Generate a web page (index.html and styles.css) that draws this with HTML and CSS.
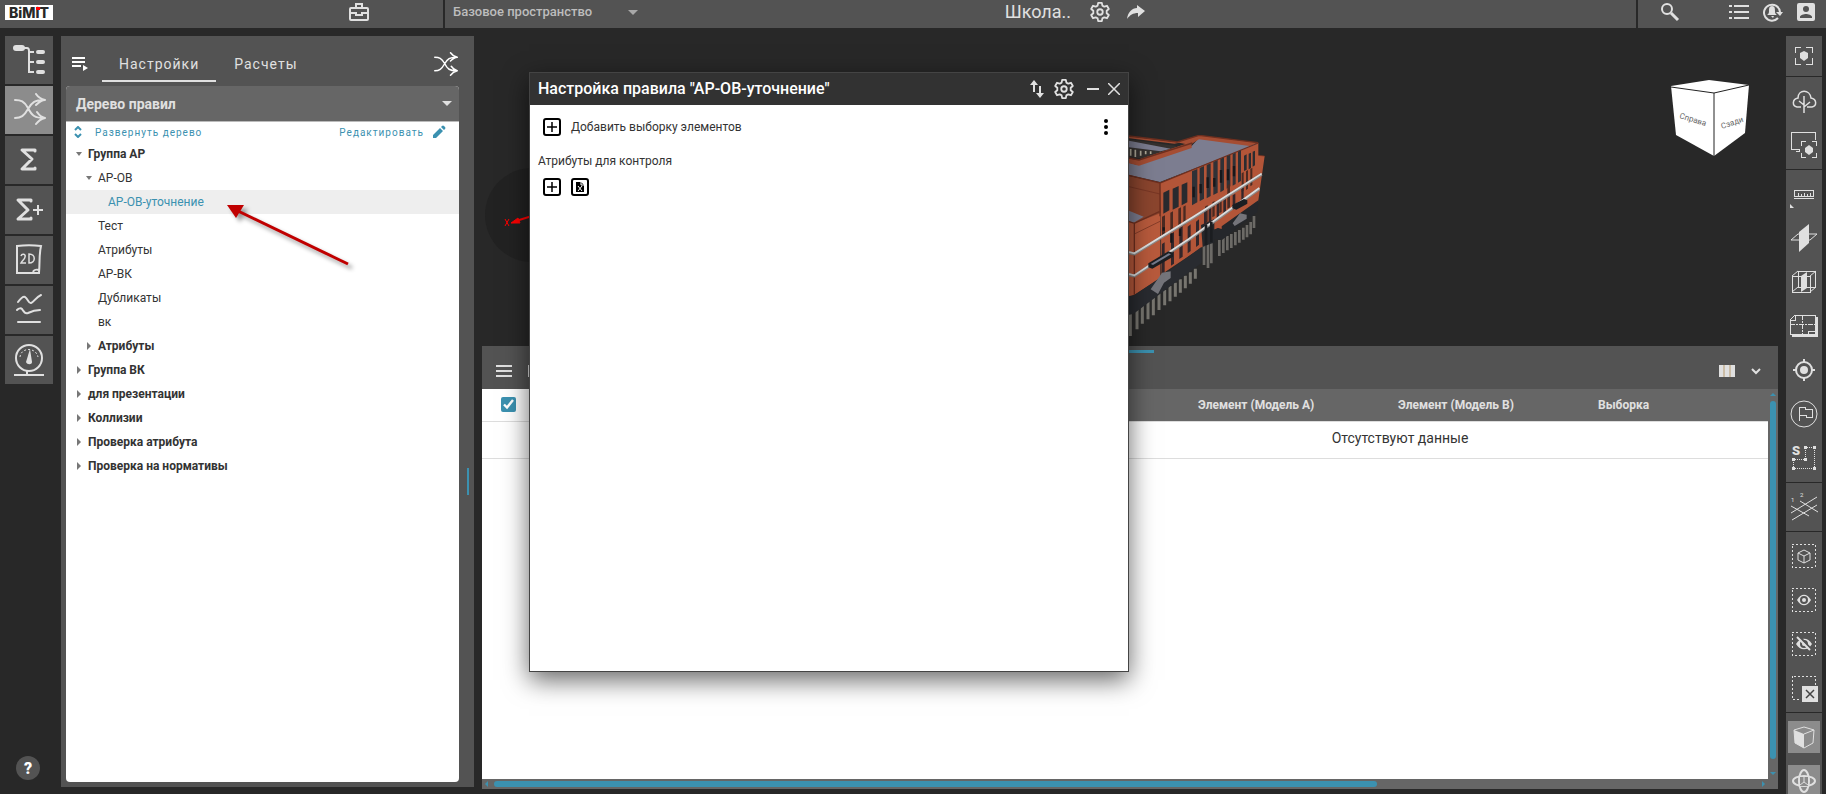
FILE: index.html
```html
<!DOCTYPE html>
<html lang="ru">
  <head>
    <meta charset="UTF-8" />
    <meta name="viewport" content="width=device-width, initial-scale=1.0" />
    <title>BiMiT</title>
    <link rel="stylesheet" href="styles.css" />
  </head>
  <body>
    <!-- общие иконки -->
    <svg class="sprite" aria-hidden="true">
      <symbol id="i-gear" viewBox="0 0 24 24">
        <path fill="none" stroke="currentColor" stroke-width="2" stroke-linejoin="round" d="M10 2h4l.6 3 2.100 1.200 2.900-1 2 3.500-2.300 2v2.600l2.300 2-2 3.500-2.900-1-2.100 1.200-.6 3h-4l-.6-3-2.100-1.200-2.900 1-2-3.500 2.300-2v-2.600l-2.300-2 2-3.500 2.900 1L9.400 5z" />
        <circle cx="12" cy="12" r="3" fill="none" stroke="currentColor" stroke-width="2" />
      </symbol>
      <symbol id="i-shuffle" viewBox="0 0 32 32">
        <path fill="none" stroke="currentColor" stroke-width="2" stroke-linecap="round" stroke-linejoin="round" d="M1 7c6 0 9 1 13 8 4 8 7 10 16 10M1 25c6 0 9-2 13-9 4-7 7-9 16-9M22 1c2 3 5 5 9 6-4 0-6 2-9 5M23 19c2 3 4 5 8 6-4 1-6 2-9 6" />
      </symbol>
      <symbol id="i-plus" viewBox="0 0 18 18">
        <rect x="1" y="1" width="16" height="16" rx="2" fill="none" stroke="currentColor" stroke-width="2" />
        <path stroke="currentColor" stroke-width="1.500" d="M9 4v10M4 9h10" />
      </symbol>
    </svg>

    <header class="topbar">
      <div class="topbar__left">
        <a href="#" class="logo">BiM<span class="logo__i">i</span>T</a>
        <button class="icon-btn" aria-label="Проекты">
          <svg width="20" height="18" viewBox="0 0 20 18" fill="none" stroke="currentColor" stroke-width="2">
            <rect x="1" y="5" width="18" height="12" rx="1" />
            <path d="M7 5V1h6v4M1 10h6v2h6v-2h6" />
          </svg>
        </button>
      </div>
      <div class="topbar__center">
        <div class="space">
          <select class="space__select" aria-label="Пространство">
            <option>Базовое пространство</option>
          </select>
          <svg class="space__caret" width="10" height="5" viewBox="0 0 10 5"><path fill="currentColor" d="M0 0h10L5 5z" /></svg>
        </div>
        <div class="project">
          <span class="project__name">Школа..</span>
          <button class="icon-btn" aria-label="Настройки проекта"><svg width="22" height="22"><use href="#i-gear" /></svg></button>
          <button class="icon-btn" aria-label="Поделиться">
            <svg width="20" height="16" viewBox="0 0 20 16"><path fill="currentColor" d="M11 1l8 6-7 6V9C7 9 4 11 1 15 2 8 6 4 11 4z" /></svg>
          </button>
        </div>
      </div>
      <div class="topbar__right">
        <button class="icon-btn search" aria-label="Поиск">
          <svg width="20" height="20" viewBox="0 0 20 20" fill="none" stroke="currentColor" stroke-width="2"><circle cx="7" cy="7" r="5" /><path d="M11 11l7 7" stroke-width="3" /></svg>
        </button>
        <button class="icon-btn" aria-label="Список">
          <svg width="20" height="16" viewBox="0 0 20 16" stroke="currentColor" stroke-width="2"><path d="M0 2h3M5 2h15M0 8h3M5 8h15M0 14h3M5 14h15" /></svg>
        </button>
        <button class="icon-btn" aria-label="Уведомления">
          <svg width="20" height="20" viewBox="0 0 20 20"><path fill="none" stroke="currentColor" stroke-width="2" d="M15 16a8 8 0 1 1 2-6" /><path fill="currentColor" d="M13 10h7l-3 4zM9 4c-3 0-3 3-3 5 0 3-1 3-2 4h10c-1-1-2-1-2-4 0-2 0-5-3-5zM8 14h3l-1 2z" /></svg>
        </button>
        <button class="icon-btn" aria-label="Профиль">
          <svg width="18" height="18" viewBox="0 0 18 18"><path fill="currentColor" fill-rule="evenodd" d="M2 0h14a2 2 0 0 1 2 2v14a2 2 0 0 1-2 2H2a2 2 0 0 1-2-2V2a2 2 0 0 1 2-2zm7 3a3 3 0 1 0 0 6 3 3 0 0 0 0-6zM3 15h12v-1c0-2-4-3-6-3s-6 1-6 3z" /></svg>
        </button>
      </div>
    </header>

    <div class="workspace">
      <nav class="rail">
        <button class="rail__btn" aria-label="Дерево">
          <svg viewBox="0 0 48 48" fill="none" stroke="currentColor" stroke-width="2"><path d="M18 12h4q2 0 2 3v21h5M24 16h5M24 26h5" /><path stroke-width="6" stroke-linecap="round" d="M11 12h6" /><path stroke-width="4" stroke-linecap="round" d="M33 16h5M33 26h5M33 36h5" /></svg>
        </button>
        <button class="rail__btn rail__btn--active" aria-label="Правила">
          <svg viewBox="0 0 48 48"><use href="#i-shuffle" x="9" y="7" width="32" height="32" /></svg>
        </button>
        <button class="rail__btn" aria-label="Сумма">
          <svg viewBox="0 0 48 48" fill="none" stroke="currentColor" stroke-width="3" stroke-linejoin="round" stroke-linecap="round"><path d="M30 15v-1H17l10 9-10 10h13v-1" /></svg>
        </button>
        <button class="rail__btn" aria-label="Сумма плюс">
          <svg viewBox="0 0 48 48" fill="none" stroke="currentColor" stroke-width="3" stroke-linejoin="round" stroke-linecap="round"><path d="M26 15v-1H13l10 10-10 9h13v-1" /><path stroke-width="2" stroke-linecap="butt" d="M28 24h10M33 19v10" /></svg>
        </button>
        <button class="rail__btn" aria-label="2D">
          <svg viewBox="0 0 48 48" fill="none" stroke="currentColor" stroke-width="2"><path d="M12 10c8-1 16-1 24 0-2 8-1 14-2 27H12zM34 34c-4-1-5 0-6 2" /><path stroke-width="1.500" d="M16 20c1-3 5-2 4 1 0 2-3 4-4 6h5M24 18v9c7 0 7-9 0-9z" /></svg>
        </button>
        <button class="rail__btn" aria-label="Графики">
          <svg viewBox="0 0 48 48" fill="none" stroke="currentColor" stroke-width="2" stroke-linecap="round"><path d="M13 16c3-4 5-6 7-5 3 2 4 7 6 6 3-1 5-6 10-8M12 24c2-2 4-2 5-1 2 3 3 5 6 4 4-2 7-3 12-3M13 36h22" /></svg>
        </button>
        <button class="rail__btn" aria-label="Показатели">
          <svg viewBox="0 0 48 48" fill="none" stroke="currentColor" stroke-width="2"><circle cx="24" cy="22" r="13" /><path d="M9 39h30M22 35v4" /><path stroke-width="1" stroke-dasharray="2 2" d="M15 21c1-10 16-10 18 0" /><path fill="currentColor" stroke="none" d="M25 13l2 13c0 3-5 3-6 0z" /></svg>
        </button>
        <button class="rail__help" aria-label="Справка">?</button>
      </nav>

      <aside class="panel">
        <div class="panel__tabs">
          <button class="icon-btn" aria-label="Список правил">
            <svg width="16" height="14" viewBox="0 0 16 14"><path stroke="currentColor" stroke-width="2" d="M0 1h13M0 5h13M0 9h9" /><path fill="currentColor" d="M11 8l5 3-5 3z" /></svg>
          </button>
          <button class="tab tab--active">Настройки</button>
          <button class="tab">Расчеты</button>
          <button class="icon-btn panel__shuffle" aria-label="Проверить"><svg width="24" height="24"><use href="#i-shuffle" /></svg></button>
        </div>
        <div class="panel__card">
          <button class="panel__title">Дерево правил
            <svg width="10" height="5" viewBox="0 0 10 5"><path fill="currentColor" d="M0 0h10L5 5z" /></svg>
          </button>
          <div class="tree-tools">
            <button class="link-btn link-btn--expand">
              <svg width="8" height="12" viewBox="0 0 8 12" fill="none" stroke="currentColor" stroke-width="2"><path d="M1 4l3-3 3 3M1 8l3 3 3-3" /></svg>
              Развернуть дерево
            </button>
            <button class="link-btn">
              Редактировать
              <svg width="14" height="14" viewBox="0 0 14 14" fill="currentColor"><path d="M1 10l7-7 3 3-7 7H1zM9 2l1-1q1-1 2 0l1 1q1 1 0 2l-1 1z" /></svg>
            </button>
          </div>
          <ul class="tree">
            <li class="tree__item tree__item--group tree__item--open">Группа АР</li>
            <li class="tree__item tree__item--l2 tree__item--open">АР-ОВ</li>
            <li class="tree__item tree__item--l3 tree__item--selected">АР-ОВ-уточнение</li>
            <li class="tree__item tree__item--l2">Тест</li>
            <li class="tree__item tree__item--l2">Атрибуты</li>
            <li class="tree__item tree__item--l2">АР-ВК</li>
            <li class="tree__item tree__item--l2">Дубликаты</li>
            <li class="tree__item tree__item--l2">вк</li>
            <li class="tree__item tree__item--l2 tree__item--group tree__item--closed">Атрибуты</li>
            <li class="tree__item tree__item--group tree__item--closed">Группа ВК</li>
            <li class="tree__item tree__item--group tree__item--closed">для презентации</li>
            <li class="tree__item tree__item--group tree__item--closed">Коллизии</li>
            <li class="tree__item tree__item--group tree__item--closed">Проверка атрибута</li>
            <li class="tree__item tree__item--group tree__item--closed">Проверка на нормативы</li>
          </ul>
        </div>
        <div class="panel__splitter"></div>
        <svg class="pointer" width="130" height="70" viewBox="0 0 130 70">
          <path d="M12 8l110 53" stroke="#c00000" stroke-width="3" />
          <path d="M1 2l17 0-8 13z" fill="#c00000" />
        </svg>
      </aside>

      <main class="main">
        <section class="viewer">
          <svg class="axes" width="94" height="94" viewBox="0 0 94 94">
            <circle cx="47" cy="47" r="47" fill="#222" />
            <path d="M47 48l-16 5" stroke="#f00" stroke-width="2" />
            <path d="M26 55l7-5 2 5zM20 51l4 7M24 51l-4 7" fill="#f00" stroke="#f00" />
          </svg>

          <svg class="building" width="136" height="204" viewBox="87 75 408 612">
            <!-- сваи -->
            <path d="M91 612v66M111 596v62M127 585v56M144 574v54M160 562v54M177 550v50M194 540v46M210 528v46M226 518v42M241 508v40M256 497v38M271 487v34M286 476v30" stroke="#77756f" stroke-width="9" />
            <path d="M312 375v90M324 370v104M334 400v60M358 390v48M370 384v45M382 378v43M394 372v42M406 366v40M418 360v38M430 353v36M441 345v37M452 336v37M462 318v36" stroke="#6c6a66" stroke-width="8" />
            <!-- стены -->
            <path d="M87 198l93 20v120l-93 20z" fill="#8b452e" />
            <path d="M180 218l295-120v38l19 2-20 140-170 135-119 80z" fill="#b35538" />
            <path d="M87 302l44 18-30 18-14-4z" fill="#7c7d90" />
            <path d="M87 335l16 5 78-30v194l-78 50-16 6z" fill="#b85a3c" />
            <!-- кровля -->
            <path d="M87 158l23 6 165-56 22-24 175 18-292 114-93-21z" fill="#7c7d90" />
            <path d="M87 88l143 20-20 14-65 26-58-6z" fill="#35312f" />
            <path d="M87 92l125 24-30 8-95-12z" fill="#7c7d90" />
            <path d="M92 117v20M106 119v22M122 122v15M137 123v10M152 124v8" stroke="#b0aa98" stroke-width="5" />
            <path d="M87 79l143 18 67-21 177 22-25 10-152-20-22 14v12l-158 53-30-7v-14l27 3 142-47-18-4-15 3-136-16z" fill="#a54d33" />
            <path d="M87 78l145 18 65-20 177 22M87 144l30 6 160-51M87 196l93 23 295-120M180 219v100M103 340v215M87 335l16 5 75-35" fill="none" stroke="#6e2f1f" stroke-width="4" />
            <path d="M87 230l93 22M103 372l77-38M475 136l19 2" fill="none" stroke="#6e2f1f" stroke-width="2" />
            <!-- цоколь -->
            <path d="M87 558l16-2 73-50 129-96v48L100 612l-13 2z" fill="#292b30" />
            <path d="M303 345l40-18v70l-35 14zM340 360l26-12 110-78-4 36-106 84-26-4z" fill="#25272b" />
            <!-- окна -->
            <path d="M190 248l18-9v62l-18 10zM218 236l18-8v62l-18 9zM245 224l17-7v60l-17 9z" fill="#292a2e" />
            <path d="M276 184l16-7v100l-16 9zM299 174l13-6v98l-13 8zM320 165l12-5v98l-12 7zM340 156l13-6v98l-13 7zM361 147l11-5v98l-11 7zM380 139l11-5v95l-11 7zM398 132l9-4v94l-9 5zM414 125l9-4v92l-9 5z" fill="#303136" />
            <path d="M432 137l8-4v46l-8 4zM446 131l7-3v46l-7 4zM458 125l7-3v44l-7 4z" fill="#2c2c30" />
            <path d="M186 320l9-4v62l-9 5zM211 308l8-4v60l-8 5zM235 296l8-4v58l-8 5zM250 290l7-4v56l-7 5zM315 290l8-5v50l-8 5zM337 277l7-4v45l-7 4zM358 268l7-4v42l-7 4zM382 226l8-4v70l-8 4zM425 190l6-4v56l-6 4zM438 184l6-4v56l-6 4zM451 177l6-4v52l-6 4z" fill="#4a2a22" />
            <path d="M186 402l8-5v90l-8 5zM213 372l9-6v95l-9 6zM238 355l10-7v92l-10 7zM263 350l9-7v80l-9 7zM288 335l9-7v76l-9 7zM312 305l7-5v50l-7 5zM326 297l8-5v50l-8 5zM350 283l7-5v44l-7 5zM370 272l8-5v42l-8 5zM398 256l8-5v44l-8 5zM424 238l7-5v40l-7 5z" fill="#33262a" />
            <path d="M281 230v32M302 222v28M323 202v32M343 204v26M363 180v38M384 178v33M402 168v31M191 352v10M214 370v28M240 358v20" stroke="#16171a" stroke-width="7" />
            <!-- пояса -->
            <path d="M87 428l16 4 175-108 207-131M87 494l16 4 165-110 210-152" fill="none" stroke="#8a8a8a" stroke-width="9" />
            <path d="M87 426l16 4 175-108 207-131M87 492l16 4 165-110 210-152" fill="none" stroke="#dedede" stroke-width="5" />
            <!-- козырьки и крыльца -->
            <path d="M145 460l60-36 14 4v12l-62 36-12-4z" fill="#1b1e22" />
            <path d="M152 462l54-32 7 3-54 32z" fill="#74798a" />
            <path d="M397 285l35-18 10 4v10l-33 18-12-4z" fill="#1b1e22" />
            <path d="M152 538l34-50 26-4v20l-20 14-18 34zM398 340l22-30 20 4v12l-36 22z" fill="#74747a" />
            <path d="M345 345l20-12v24l-20-6z" fill="#b35538" />
            <path d="M318 345v60M334 335v62" stroke="#1b1d20" stroke-width="8" />
          </svg>

          <svg class="cube" width="80" height="78" viewBox="0 0 80 78">
            <path d="M1 6l38-6 40 5-4 48-31 23L6 55z" fill="#fff" />
            <path d="M1 7l43 6 35-8M44 13v63" fill="none" stroke="#222" />
            <text x="9" y="38" transform="rotate(17 9 38)">Справа</text>
            <text x="52" y="49" transform="rotate(-19 52 49)">Сзади</text>
          </svg>
        </section>

        <section class="results">
          <div class="results__handle"></div>
          <div class="results__bar">
            <button class="icon-btn" aria-label="Меню">
              <svg width="16" height="12" viewBox="0 0 16 12" stroke="currentColor" stroke-width="2"><path d="M0 1h16M0 6h16M0 11h16" /></svg>
            </button>
            <button class="icon-btn" aria-label="Фильтр">
              <svg width="14" height="12" viewBox="0 0 14 12" fill="none" stroke="currentColor" stroke-width="2"><path d="M1 1h12v10H1z" /></svg>
            </button>
            <button class="icon-btn results__columns" aria-label="Столбцы">
              <svg width="16" height="12" viewBox="0 0 16 12"><path fill="#e0e0e0" d="M0 0h16v12H0z" /><path d="M5 0v12M11 0v12" stroke="#b89a6c" stroke-width="1" /></svg>
            </button>
            <button class="icon-btn" aria-label="Свернуть">
              <svg width="10" height="8" viewBox="0 0 10 8" fill="none" stroke="currentColor" stroke-width="2"><path d="M1 2l4 4 4-4" /></svg>
            </button>
          </div>
          <div class="results__body">
            <div class="results__scroll">
              <table class="grid">
                <colgroup>
                  <col class="grid__check" />
                  <col class="grid__wide" />
                  <col class="grid__col" />
                  <col class="grid__col" />
                  <col class="grid__col" />
                  <col />
                </colgroup>
                <thead>
                  <tr>
                    <th class="grid__pin"><input type="checkbox" class="check" aria-label="Выбрать все" checked /></th>
                    <th></th>
                    <th>Элемент (Модель А)</th>
                    <th>Элемент (Модель В)</th>
                    <th>Выборка</th>
                    <th></th>
                  </tr>
                </thead>
                <tbody>
                  <tr>
                    <td colspan="6">Отсутствуют данные</td>
                  </tr>
                </tbody>
              </table>
            </div>
            <div class="vbar">
              <svg width="6" height="3" viewBox="0 0 6 3"><path fill="currentColor" d="M0 3h6L3 0z" /></svg>
              <div class="vbar__thumb"></div>
              <svg width="6" height="3" viewBox="0 0 6 3"><path fill="currentColor" d="M0 0h6L3 3z" /></svg>
            </div>
          </div>
          <div class="hbar">
            <svg width="3" height="6" viewBox="0 0 3 6"><path fill="currentColor" d="M3 0v6L0 3z" /></svg>
            <div class="hbar__track"><div class="hbar__thumb"></div></div>
            <svg width="3" height="6" viewBox="0 0 3 6"><path fill="currentColor" d="M0 0v6l3-3z" /></svg>
          </div>
        </section>

        <div class="modal" role="dialog" aria-labelledby="modal-title">
          <div class="modal__header">
            <h2 id="modal-title">Настройка правила "АР-ОВ-уточнение"</h2>
            <button class="icon-btn" aria-label="Импорт и экспорт">
              <svg width="14" height="18" viewBox="0 0 14 18"><path fill="currentColor" d="M0 5l4-5 4 5H5v7H3V5zM6 13h3V6h2v7h3l-4 5z" /></svg>
            </button>
            <button class="icon-btn" aria-label="Настройки"><svg width="22" height="22"><use href="#i-gear" /></svg></button>
            <button class="icon-btn" aria-label="Свернуть">
              <svg width="12" height="12" viewBox="0 0 12 12" stroke="currentColor" stroke-width="2"><path d="M0 6h12" /></svg>
            </button>
            <button class="icon-btn" aria-label="Закрыть">
              <svg width="12" height="12" viewBox="0 0 12 12" stroke="currentColor" stroke-width="1.500"><path d="M0 0l12 12M12 0L0 12" /></svg>
            </button>
          </div>
          <div class="modal__body">
            <div class="modal__row">
              <button class="icon-btn" id="add-set" aria-label="Добавить"><svg width="18" height="18"><use href="#i-plus" /></svg></button>
              <label for="add-set">Добавить выборку элементов</label>
              <button class="icon-btn modal__more" aria-label="Ещё">
                <svg width="4" height="16" viewBox="0 0 4 16" fill="currentColor"><circle cx="2" cy="2" r="2" /><circle cx="2" cy="8" r="2" /><circle cx="2" cy="14" r="2" /></svg>
              </button>
            </div>
            <p class="modal__label">Атрибуты для контроля</p>
            <div class="modal__row">
              <button class="icon-btn" aria-label="Добавить атрибут"><svg width="18" height="18"><use href="#i-plus" /></svg></button>
              <button class="icon-btn" aria-label="Загрузить из Excel">
                <svg width="18" height="18" viewBox="0 0 18 18"><rect x="1" y="1" width="16" height="16" rx="2" fill="none" stroke="currentColor" stroke-width="2" /><path fill="currentColor" d="M5 4h5l3 3v7H5z" /><path d="M7 8l4 5M11 8l-4 5M10 4v3h3" stroke="#fff" fill="none" /></svg>
              </button>
            </div>
          </div>
        </div>
      </main>

      <nav class="tools">
        <div class="tools__group tools__group--first">
          <button class="tool" aria-label="Показать всё">
            <svg viewBox="0 0 32 32"><path class="crisp" d="M7 13V7h6M18 7h6v6M24 18v6h-6M13 24H7v-6" /><path class="fill" d="M16 11l4 2v5l-4 3-4-3v-5z" /></svg>
          </button>
        </div>
        <div class="tools__group">
          <button class="tool" aria-label="Окружение">
            <svg viewBox="0 0 32 32"><path stroke-width="1.500" d="M13 22H9c-5-1-5-8 1-9 0-9 12-9 13 0 6 1 6 8 1 9h-5M16 11v17M16 20l-5-4M16 22l6-5" /></svg>
          </button>
          <button class="tool" aria-label="Фокус экрана">
            <svg viewBox="0 0 32 32"><path class="crisp" d="M11 20H3V3h24v8M11 20v2H8M13 17v-5h5M24 12h4v5M28 24v4h-4M18 28h-5v-4" /><path class="fill" d="M21 16l4 3v4l-4 3-4-3v-4z" /></svg>
          </button>
        </div>
        <div class="tools__group">
          <button class="tool" aria-label="Измерения">
            <svg viewBox="0 0 32 32"><path class="crisp" d="M6 12h19v6H6zM6 20h20M10 15v3M13 16v2M16 15v3M19 16v2M22 15v3" /><path class="fill" d="M2 26v4h4z" /></svg>
          </button>
          <button class="tool" aria-label="Секущая плоскость">
            <svg viewBox="0 0 32 32"><path d="M3 18l7-6h19l-7 6z" /><path class="fill" d="M11 10l10-8v19l-10 9z" /></svg>
          </button>
          <button class="tool" aria-label="Секущий куб">
            <svg viewBox="0 0 32 32"><path class="crisp" d="M4 10h18v16H4zM10 5h17v16H10z" /><path d="M4 10l6-5M22 10l6-5M4 26l6-5M22 26l6-5" /><path class="fill" d="M13 10l6-4v16l-6 4z" /></svg>
          </button>
          <button class="tool" aria-label="План">
            <svg viewBox="0 0 32 32"><path class="crisp" d="M7 5h20v19H2V10zM2 10h5V5M20 24v-3h7" /><path class="crisp" stroke-dasharray="5 1 2 1" d="M14 5v19M2 14h25" /><path stroke-width="2" d="M29 7v19H4" /></svg>
          </button>
          <button class="tool" aria-label="Цель">
            <svg viewBox="0 0 32 32"><circle cx="16" cy="16" r="8" stroke-width="2" /><circle class="fill" cx="16" cy="16" r="4" /><path stroke-width="2" d="M16 5v4M16 23v4M5 16h4M23 16h4" /></svg>
          </button>
          <button class="tool" aria-label="Замечания">
            <svg viewBox="0 0 32 32"><circle cx="16" cy="16" r="13" /><path class="crisp" d="M11 23V9h6v2h7v8h-6v-2h-7" /></svg>
          </button>
          <button class="tool" aria-label="Площадь">
            <svg viewBox="0 0 32 32"><path class="crisp" stroke-dasharray="1 1" d="M17 5h9v21H5V17h12z" /><path class="fill" d="M16 4h3v3h-3zM25 4h3v3h-3zM25 25h3v3h-3zM4 25h3v3H4zM4 16h3v3H4zM16 16h3v3h-3z" /><text x="4" y="13" class="big">S</text></svg>
          </button>
        </div>
        <div class="tools__group">
          <button class="tool" aria-label="Оси">
            <svg viewBox="0 0 32 32"><path d="M3 22L29 6M4 29l25-15M3 15l18 10M12 10l18 11" /><text x="3" y="11">1</text><text x="12" y="6">2</text></svg>
          </button>
        </div>
        <div class="tools__group">
          <button class="tool" aria-label="Выделить">
            <svg viewBox="0 0 32 32"><rect class="dash" x="4" y="4" width="23" height="23" /><path d="M16 10l6 3v7l-6 3-6-3v-7zM10 13l6 3 6-3M16 16v7" /></svg>
          </button>
          <button class="tool" aria-label="Показать">
            <svg viewBox="0 0 32 32"><rect class="dash" x="4" y="4" width="23" height="23" /><path class="fill" d="M9 16c4-7 10-7 14 0-4 7-10 7-14 0z" /><circle cx="16" cy="16" r="3" stroke="#535353" stroke-width="2" /></svg>
          </button>
          <button class="tool" aria-label="Скрыть">
            <svg viewBox="0 0 32 32"><rect class="dash" x="4" y="4" width="23" height="23" /><path class="fill" d="M8 16c4-7 12-7 16 0-4 7-12 7-16 0z" /><circle cx="16" cy="16" r="3" stroke="#535353" stroke-width="2" /><path stroke="#535353" stroke-width="2" d="M11 8l12 13" /><path stroke-width="2" d="M9 9l13 13" /></svg>
          </button>
          <button class="tool" aria-label="Сбросить">
            <svg viewBox="0 0 32 32"><path class="dash" d="M27 13V4H4v23h9" /><path class="fill" d="M14 14h16v16H14z" /><path stroke="#444" stroke-width="1.500" d="M18 18l8 8M26 18l-8 8" /></svg>
          </button>
        </div>
        <div class="tools__group">
          <button class="tool tool--active" aria-label="Куб">
            <svg viewBox="0 0 32 32"><path d="M6 9l10-3 10 3-1 13-9 5-9-5z" /><path class="fill" d="M6 9l10 4v14l-9-5z" /><path d="M16 13l10-4" /></svg>
          </button>
          <button class="tool tool--active" aria-label="Орбита">
            <svg viewBox="0 0 32 32"><ellipse cx="16" cy="16" rx="11" ry="5" stroke-width="2" /><ellipse cx="16" cy="16" rx="5" ry="11" stroke-width="2" /><path class="mask" d="M12 12h8v9h-8z" /><path d="M16 12v5l-4 3M16 17l4 3" /></svg>
          </button>
        </div>
      </nav>
    </div>
  </body>
</html>
```
FILE: styles.css
```css
* {
  box-sizing: border-box;
}

body {
  margin: 0;
  height: 100vh;
  display: flex;
  flex-direction: column;
  overflow: hidden;
  background-color: #282828;
  color: #333;
  font-family: Roboto, sans-serif;
  font-size: 12px;
}

button {
  font-family: inherit;
  border: none;
  cursor: pointer;
}

svg {
  display: block;
  flex-shrink: 0;
}

.sprite {
  position: absolute;
  width: 0;
  height: 0;
}

.icon-btn {
  padding: 0;
  background: none;
  color: inherit;
}

/* шапка */
.topbar {
  display: flex;
  gap: 2px;
  height: 28px;
  flex-shrink: 0;
  color: #e0e0e0;
}

.topbar > div {
  display: flex;
  align-items: center;
  padding-bottom: 4px;
  background-color: #535353;
}

.topbar__left {
  width: 443px;
  padding-left: 5px;
  padding-right: 74px;
  justify-content: space-between;
}

.logo {
  width: 48px;
  height: 15px;
  background-color: #fff;
  color: #282828;
  font: 800 14px/15px Inter, sans-serif;
  text-align: center;
  text-decoration: none;
}

.logo__i {
  position: relative;
}

/* красная точка над i */
.logo__i::after {
  content: "";
  position: absolute;
  top: 3px;
  left: 0;
  width: 4px;
  height: 3px;
  background-color: #f00;
}

.topbar__center {
  flex: 1;
}

.space {
  display: flex;
  align-items: center;
  width: 47%;
  padding-left: 8px;
  color: #bdbdbd;
}

.space__select {
  width: 175px;
  padding: 0;
  border: none;
  background: none;
  color: inherit;
  appearance: none;
  font: 500 13px/20px Roboto, sans-serif;
}

.space__caret {
  color: #a8a8a8;
}

.project {
  display: flex;
  align-items: center;
}

.project__name {
  margin-right: 18px;
  font-size: 18px;
  line-height: 24px;
}

.project .icon-btn {
  margin-right: 15px;
}

.topbar__right {
  width: 188px;
  gap: 14px;
  padding-right: 11px;
  justify-content: flex-end;
}

.search {
  margin-right: 35px;
}

.workspace {
  flex: 1;
  min-height: 0;
  display: flex;
}

/* левая панель кнопок */
.rail {
  width: 61px;
  padding: 8px 8px 14px 5px;
  display: flex;
  flex-direction: column;
  gap: 2px;
}

.rail__btn {
  width: 48px;
  height: 48px;
  padding: 0;
  background-color: #535353;
  color: #e0e0e0;
}

.rail__btn--active {
  background-color: #8c8c8c;
}

.rail__help {
  width: 24px;
  height: 24px;
  margin: auto 0 0 11px;
  padding: 0;
  border-radius: 50%;
  background-color: #535353;
  color: #fff;
  font-size: 16px;
  font-weight: 900;
}

/* дерево правил */
.panel {
  position: relative;
  width: 413px;
  margin: 8px 8px 7px 0;
  padding: 10px 15px 5px 5px;
  display: flex;
  flex-direction: column;
  background-color: #535353;
}

.panel__tabs {
  display: flex;
  align-items: center;
  height: 36px;
  margin-bottom: 4px;
  padding: 0 1px 0 6px;
  color: #fff;
}

.tab {
  height: 36px;
  padding: 2px 17px 0;
  border-bottom: 2px solid transparent;
  background: none;
  color: #e0e0e0;
  font-size: 14px;
  letter-spacing: 1px;
}

.icon-btn + .tab {
  margin: 0 1px 0 14px;
}

.tab--active {
  border-color: #e0e0e0;
}

.panel__shuffle {
  margin-left: auto;
}

.panel__card {
  flex: 1;
  border-radius: 4px;
  background-color: #fff;
  overflow: hidden;
}

.panel__title {
  display: flex;
  align-items: center;
  justify-content: space-between;
  width: 100%;
  height: 36px;
  padding: 0 7px 0 10px;
  border-bottom: 1px solid #bbb;
  background-color: #666;
  color: #e0e0e0;
  font-size: 14px;
  font-weight: 700;
}

.tree-tools {
  display: flex;
  justify-content: space-between;
  height: 20px;
  padding: 0 13px 0 8px;
}

.link-btn {
  display: flex;
  align-items: center;
  gap: 8px;
  padding: 0;
  background: none;
  color: #3b91b0;
  font-size: 10px;
  letter-spacing: 1px;
}

.link-btn--expand {
  gap: 13px;
}

.tree {
  margin: 0;
  padding: 0;
  list-style: none;
}

.tree__item {
  display: flex;
  align-items: center;
  height: 24px;
  padding-left: 22px;
  line-height: 24px;
}

.tree__item--l2 {
  padding-left: 32px;
}

.tree__item--l3 {
  padding-left: 42px;
}

.tree__item--group {
  font-weight: 700;
}

.tree__item--selected {
  background-color: #eee;
  color: #3b91b0;
}

.tree__item--open::before,
.tree__item--closed::before {
  content: "";
  width: 0;
  height: 0;
  border: 3px solid transparent;
}

.tree__item--open::before {
  margin: 0 6px 0 -12px;
  border-top: 4px solid #777;
  border-bottom: none;
}

.tree__item--closed::before {
  margin: 0 7px 0 -11px;
  border-width: 4px 0 4px 4px;
  border-left-color: #777;
}

.panel__splitter {
  position: absolute;
  top: 432px;
  right: 5px;
  width: 2px;
  height: 27px;
  background-color: #3b91b0;
}

.pointer {
  position: absolute;
  top: 167px;
  left: 165px;
  filter: drop-shadow(4px 4px 2px rgba(0, 0, 0, 0.4));
}

/* сцена и таблица */
.main {
  position: relative;
  flex: 1;
  min-width: 0;
  margin: 0 8px 5px 0;
  display: flex;
  flex-direction: column;
}

.viewer {
  position: relative;
  height: 318px;
  overflow: hidden;
}

.axes {
  position: absolute;
  top: 140px;
  left: 3px;
}

.building {
  position: absolute;
  top: 107px;
  left: 647px;
}

.cube {
  position: absolute;
  top: 52px;
  right: 28px;
}

.cube text {
  fill: #666;
  font-size: 8px;
}

.results {
  position: relative;
  flex: 1;
  min-height: 0;
  display: flex;
  flex-direction: column;
}

.results__handle {
  position: absolute;
  top: 4px;
  left: calc(50% - 24px);
  width: 48px;
  height: 3px;
  background-color: #3b91b0;
}

.results__bar {
  display: flex;
  align-items: center;
  gap: 16px;
  height: 43px;
  padding: 6px 17px 0 14px;
  background-color: #535353;
  color: #e0e0e0;
}

.results__columns {
  margin-left: auto;
}

.results__body {
  flex: 1;
  min-height: 0;
  display: flex;
  background-color: #fff;
}

.results__scroll {
  flex: 1;
  overflow: hidden;
}

.grid {
  width: 1836px;
  table-layout: fixed;
  border-collapse: collapse;
}

.grid__check {
  width: 60px;
}

.grid__wide {
  width: 648px;
}

.grid__col {
  width: 200px;
}

.grid th {
  height: 32px;
  padding: 0 8px;
  border-bottom: 1px solid #ddd;
  background-color: #666;
  color: #e0e0e0;
  font-size: 12px;
  text-align: left;
}

.grid .grid__pin {
  padding-left: 19px;
  background-color: #fff;
}

.grid td {
  height: 37px;
  padding: 0 0 4px;
  border-bottom: 1px solid #ddd;
  font-size: 14px;
  text-align: center;
}

.check {
  display: block;
  width: 15px;
  height: 15px;
  margin: 0;
  accent-color: #3b91b0;
}

.vbar {
  width: 10px;
  padding: 4px 0;
  display: flex;
  flex-direction: column;
  align-items: center;
  gap: 5px;
  background-color: #666;
  color: #3b91b0;
}

.vbar__thumb {
  flex: 1;
  width: 6px;
  margin-bottom: 8px;
  border-radius: 3px;
  background-color: #3b91b0;
}

.hbar {
  display: flex;
  align-items: center;
  gap: 6px;
  height: 10px;
  padding: 0 13px 0 3px;
  background-color: #666;
  color: #3b91b0;
}

.hbar__track {
  flex: 1;
}

.hbar__thumb {
  width: 70%;
  height: 6px;
  border-radius: 3px;
  background-color: #3b91b0;
}

/* окно настройки правила */
.modal {
  position: absolute;
  top: 44px;
  left: 47px;
  width: 600px;
  height: 600px;
  border: 1px solid #444;
  background-color: #fff;
  box-shadow: 0 8px 24px rgba(0, 0, 0, 0.6);
}

.modal__header {
  display: flex;
  align-items: center;
  height: 32px;
  padding: 0 8px;
  background-color: #323232;
  color: #e0e0e0;
}

.modal__header h2 {
  margin: 0 auto 0 0;
  color: #fff;
  font-size: 16px;
  font-weight: 500;
  line-height: 30px;
}

.modal__header .icon-btn {
  margin-left: 9px;
}

.modal__header .icon-btn:nth-of-type(3) {
  margin-left: 12px;
}

.modal__body {
  padding: 13px 20px 0 13px;
  color: #000;
}

.modal__row {
  display: flex;
  align-items: center;
  gap: 10px;
}

.modal__row label,
.modal__label {
  color: #333;
}

.modal__more {
  margin-left: auto;
}

.modal__label {
  margin: 16px 0 8px -5px;
  line-height: 18px;
}

/* инструменты справа */
.tools {
  width: 36px;
  margin: 8px 4px 0 0;
  display: flex;
  flex-direction: column;
  gap: 1px;
}

.tools__group {
  flex-shrink: 0;
  padding: 8px 2px;
  display: flex;
  flex-direction: column;
  gap: 12px;
  background-color: #535353;
}

.tools__group--first {
  padding: 4px 2px;
}

.tool {
  width: 32px;
  height: 32px;
  padding: 0;
  background: none;
  color: #e0e0e0;
}

.tool--active {
  background-color: #8c8c8c;
}

.tool svg {
  fill: none;
  stroke: currentColor;
}

.tool .fill {
  fill: currentColor;
  stroke: none;
}

.tool .mask {
  fill: #8c8c8c;
  stroke: none;
}

.tool .crisp {
  shape-rendering: crispEdges;
}

.tool .dash {
  stroke-dasharray: 2 2;
  shape-rendering: crispEdges;
}

.tool text {
  fill: currentColor;
  stroke: none;
  font-size: 6px;
}

.tool .big {
  font-size: 13px;
  font-weight: 900;
}
```
